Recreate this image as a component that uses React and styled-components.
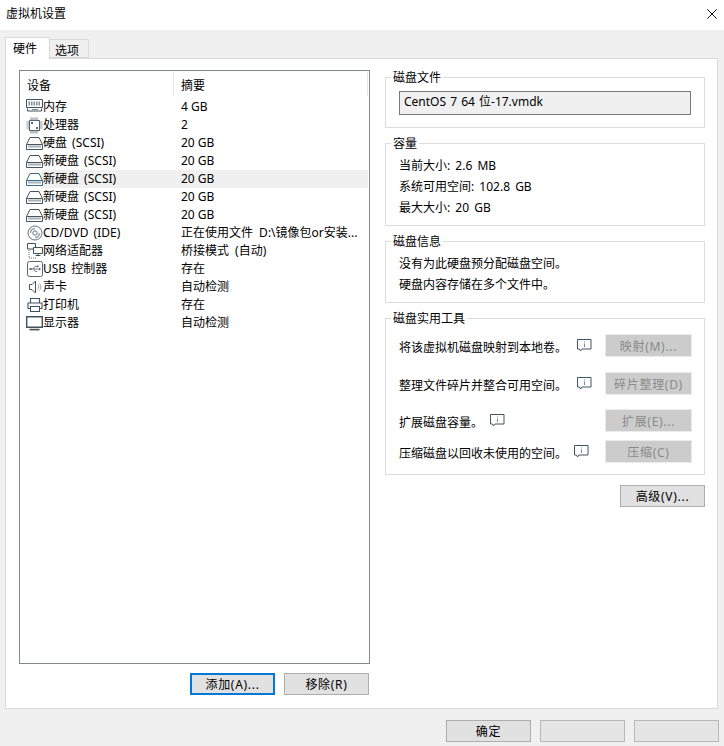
import React from 'react';
import styled, { createGlobalStyle } from 'styled-components';

const Global = createGlobalStyle`
  html, body { margin: 0; padding: 0; background: #f0f0f0; }
  body { font-family: "Noto Sans", "Noto Sans CJK SC", sans-serif; font-size: 12px; color: #000; }
  * { box-sizing: border-box; }
`;

const Window = styled.div`
  width: 724px; height: 746px; display: flex; flex-direction: column; background: #f0f0f0; overflow: hidden;
`;
const TitleBar = styled.div`
  height: 30px; flex: none; background: #fff; display: flex; align-items: center; justify-content: space-between;
  padding: 0 7px 2px 6px; line-height: 16px;
`;
const Tabs = styled.div`
  display: flex; align-items: flex-end; height: 28px; flex: none; padding: 7px 0 0 5px; position: relative; z-index: 1;
`;
const Tab = styled.div`
  height: ${p => (p.$active ? '22px' : '19px')};
  width: ${p => (p.$active ? '45px' : '39px')};
  margin-bottom: ${p => (p.$active ? '-1px' : '0')};
  padding-left: ${p => (p.$active ? '7px' : '5px')};
  line-height: ${p => (p.$active ? '21px' : '22px')};
  background: ${p => (p.$active ? '#fff' : '#f0f0f0')};
  border: 1px solid #d9d9d9;
  border-bottom: ${p => (p.$active ? 'none' : '1px solid #d9d9d9')};
  border-left: ${p => (p.$active ? '1px solid #d9d9d9' : 'none')};
`;
const Panel = styled.div`
  margin: 0 6px 0 5px; height: 651px; flex: none; background: #fff; border: 1px solid #d9d9d9;
  padding: 11px 0 0 13px; display: flex; gap: 15px;
`;
const LeftCol = styled.div`
  width: 351px; flex: none; display: flex; flex-direction: column;
`;
const ListBox = styled.div`
  height: 594px; border: 1px solid #828790; padding: 1px 1px 0 1px; display: flex; flex-direction: column;
`;
const HeadRow = styled.div`
  display: grid; grid-template-columns: 153px 1fr; height: 24px; flex: none; margin-bottom: 2px;
`;
const HeadCell = styled.div`
  padding-left: ${p => (p.$second ? '7px' : '6px')};
  padding-top: 5px; line-height: 18px;
  border-right: 1px solid #e5e5e5;
`;
const Row = styled.div`
  display: grid; grid-template-columns: 153px 1fr; height: 18px; line-height: 18px;
`;
const DevCell = styled.div`
  display: flex; align-items: center; padding-left: 5px; white-space: nowrap; word-spacing: 2px;
  background: ${p => (p.$sel ? 'linear-gradient(90deg,#fff 20px,#f0f0f0 20px)' : 'transparent')};
`;
const IconBox = styled.span`
  width: 17px; height: 18px; flex: none; display: inline-flex; align-items: center; justify-content: center;
`;
const SumCell = styled.div`
  padding-left: 7px; white-space: nowrap; word-spacing: ${p => (p.$long ? '3px' : '0')};
  background: ${p => (p.$sel ? '#f0f0f0' : 'transparent')};
`;
const ListActions = styled.div`
  display: flex; justify-content: flex-end; gap: 9px; margin-top: 9px; padding-right: 1px;
`;
const Btn = styled.div`
  width: ${p => p.$w || 85}px; height: ${p => p.$h || 22}px; display: flex; align-items: center; justify-content: center;
  background: #e1e1e1; border: 1px solid #adadad; line-height: 16px; letter-spacing: .7px; padding-top: 2px;
  ${p => p.$focus && 'border: 2px solid #0078d7;'}
  ${p => p.$disabled && 'background: #ccc; border: 1px solid #ebebeb; color: #8a8a8a;'}
  ${p => p.$blank && 'background: #e5e5e5; border-color: #b8b8b8;'}
`;
const RightCol = styled.div`
  width: 320px; flex: none; padding-top: 7px; display: flex; flex-direction: column;
`;
const Group = styled.fieldset`
  margin: 0 0 15px; padding: 0; border: 1px solid #dcdcdc; height: ${p => p.$h}px; position: relative; min-width: 0;
`;
const Legend = styled.div`
  position: absolute; top: -8px; left: 5px; padding: 0 2px; background: #fff; line-height: 16px;
`;
const FileBox = styled.div`
  margin: 13px 13px 0 13px; height: 24px; border: 1px solid #7a7a7a; background: #f0f0f0; padding-left: 4px; line-height: 20px; word-spacing: 1px;
`;
const Lines = styled.div`
  padding: 14px 0 0 13px; display: flex; flex-direction: column; gap: 5px; line-height: 16px; word-spacing: 2px;
`;
const Tools = styled.div`
  display: flex; flex-direction: column; padding: 15px 13px 0 13px;
`;
const ToolRow = styled.div`
  display: grid; grid-template-columns: 206px 1fr; align-items: center; height: 23px; margin-bottom: ${p => p.$mb}px;
`;
const ToolText = styled.div`
  display: flex; align-items: center; white-space: nowrap; justify-content: space-between; width: ${p => p.$w}px;
`;
const ToolLabel = styled.span`
  padding-top: 4px; line-height: 16px;
`;
const ToolBtn = styled(Btn)` justify-self: end; `;
const AdvancedRow = styled.div`
  display: flex; justify-content: flex-end; margin-top: -5px;
`;
const BottomBar = styled.div`
  display: flex; justify-content: flex-end; gap: 9px; padding: 11px 5px 0 0;
`;

const IC = { fill: 'none', stroke: '#3f5260', strokeWidth: 1 };

const Ram = () => (
  <svg width="17" height="14" viewBox="0 0 17 14" {...IC} style={{ marginBottom: 2 }}>
    <path d="M.5.5h16v8h-16z" strokeWidth="1" />
    <path d="M2.5 3.5h12M2.5 5.5h12" strokeDasharray="1.5 1" stroke="#7f8d96" strokeWidth="2" />
    <path d="M1.5 9.5v2.5h14v-2.5" />
    <path d="M6 10.5h6" stroke="#7f8d96" />
  </svg>
);
const Cpu = () => (
  <svg width="17" height="17" viewBox="0 0 17 17" {...IC}>
    <path d="M3.5 3.5h10v10h-10z" />
    <path d="M5 .5v3M7 .5v3M9 .5v3M11 .5v3M5 13.5v3M7 13.5v3M9 13.5v3M11 13.5v3M.5 5h3M.5 7h3M.5 9h3M.5 11h3M13.5 5h3M13.5 7h3M13.5 9h3M13.5 11h3" stroke="#8996a0" strokeWidth="1.2" />
    <path d="M5 5h2v2h-2zM10 10h2v2h-2z" fill="#59696f" stroke="none" />
  </svg>
);
const Disk = ({ sel }) => (
  <svg width="17" height="13" viewBox="0 0 17 13" {...IC} stroke={sel ? '#3a6c90' : '#46565f'}>
    <path d="M4 .5h9l3.5 7v5H.5v-5z" strokeLinejoin="miter" />
    <path d="M.5 7.5h16" />
    <path d="M2 9.5h13" stroke="#a6b1b8" strokeWidth="2" />
  </svg>
);
const Cd = () => (
  <svg width="16" height="16" viewBox="0 0 16 16" {...IC} stroke="#64727c">
    <circle cx="8" cy="8" r="7" />
    <circle cx="8" cy="8" r="2.2" />
    <path d="M3.5 8A4.5 4.5 0 0 1 8 3.5M12.5 8A4.5 4.5 0 0 1 8 12.5" stroke="#98a4ab" strokeWidth="1.5" />
  </svg>
);
const Net = () => (
  <svg width="16" height="16" viewBox="0 0 16 16" {...IC}>
    <path d="M.5.5h8v5.5h-8z" />
    <path d="M6.5 4.5h9v6h-9z" fill="#fff" />
    <path d="M11 10.5v2M8.5 12.5h5" />
    <path d="M2 7v8h7" strokeDasharray="1 1" stroke="#65757f" />
  </svg>
);
const Usb = () => (
  <svg width="16" height="16" viewBox="0 0 16 16" {...IC} stroke="#546670">
    <rect x=".5" y=".5" width="15" height="15" rx="2" />
    <path d="M3.5 8h9M6 8l2-2.5h2M6.5 8l2 2.5h1.5" stroke="#6f7f88" />
    <path d="M2.5 7h2v2h-2zM10 4.5h1.5v1.5H10z" fill="#546670" stroke="none" />
    <path d="M12 6.5l2 1.5-2 1.5z" fill="#546670" stroke="none" />
  </svg>
);
const Sound = () => (
  <svg width="16" height="16" viewBox="0 0 16 16" {...IC}>
    <path d="M2.5 5.5h2.5l3.5-3.5v12l-3.5-3.5h-2.5z" />
    <path d="M10.5 5.5a3 3 0 0 1 0 5M12.5 4.5a5 5 0 0 1 0 7" stroke="#9aa6ae" />
  </svg>
);
const Printer = () => (
  <svg width="16" height="16" viewBox="0 0 16 16" {...IC} strokeWidth="1.1">
    <path d="M3.5 6v-4.5h9v4.5" />
    <path d="M3.5 11.5h-2.5v-5.5h14v5.5h-2.5" />
    <path d="M3.5 9.5h9v5h-9z" />
  </svg>
);
const Monitor = () => (
  <svg width="17" height="15" viewBox="0 0 17 15" {...IC}>
    <path d="M.7.7h15.6v10.6H.7z" strokeWidth="1.4" />
    <path d="M3.5 13.6h10" strokeWidth="1.6" />
  </svg>
);
const Info = () => (
  <svg width="15" height="13" viewBox="0 0 15 13" fill="none" stroke="#3f5563">
    <path d="M.5.5h13.5v9.5h-9l-1.5 2-1-2h-2z" />
    <path d="M7.5 2.5v1M7.5 4.5v3.5" stroke="#7d8a93" />
  </svg>
);
const CloseX = () => (
  <svg width="10" height="10" viewBox="0 0 10 10" fill="none" stroke="#111"><path d="M.3.3l9.4 9.4M9.7.3l-9.4 9.4" /></svg>
);

const devices = [
  [<Ram />, '内存', '4 GB'],
  [<Cpu />, '处理器', '2'],
  [<Disk />, '硬盘 (SCSI)', '20 GB'],
  [<Disk />, '新硬盘 (SCSI)', '20 GB'],
  [<Disk sel />, '新硬盘 (SCSI)', '20 GB', true],
  [<Disk />, '新硬盘 (SCSI)', '20 GB'],
  [<Disk />, '新硬盘 (SCSI)', '20 GB'],
  [<Cd />, 'CD/DVD (IDE)', '正在使用文件 D:\\镜像包or安装...'],
  [<Net />, '网络适配器', '桥接模式 (自动)'],
  [<Usb />, 'USB 控制器', '存在'],
  [<Sound />, '声卡', '自动检测'],
  [<Printer />, '打印机', '存在'],
  [<Monitor />, '显示器', '自动检测'],
];

const tools = [
  ['将该虚拟机磁盘映射到本地卷。', 193, '映射(M)...', 15],
  ['整理文件碎片并整合可用空间。', 193, '碎片整理(D)', 14],
  ['扩展磁盘容量。', 106, '扩展(E)...', 8],
  ['压缩磁盘以回收未使用的空间。', 190, '压缩(C)', 0],
];

export default function App() {
  return (
    <Window>
      <Global />
      <TitleBar>
        <span>虚拟机设置</span>
        <CloseX />
      </TitleBar>
      <Tabs>
        <Tab $active>硬件</Tab>
        <Tab>选项</Tab>
      </Tabs>
      <Panel>
        <LeftCol>
          <ListBox>
            <HeadRow>
              <HeadCell>设备</HeadCell>
              <HeadCell $second>摘要</HeadCell>
            </HeadRow>
            {devices.map(([icon, name, sum, sel], i) => (
              <Row key={i}>
                <DevCell $sel={sel}><IconBox>{icon}</IconBox>{name}</DevCell>
                <SumCell $sel={sel} $long={!sum.endsWith('GB')}>{sum}</SumCell>
              </Row>
            ))}
          </ListBox>
          <ListActions>
            <Btn $focus>添加(A)...</Btn>
            <Btn>移除(R)</Btn>
          </ListActions>
        </LeftCol>
        <RightCol>
          <Group $h={51}>
            <Legend>磁盘文件</Legend>
            <FileBox>CentOS 7 64 位-17.vmdk</FileBox>
          </Group>
          <Group $h={83}>
            <Legend>容量</Legend>
            <Lines>
              <div>当前大小: 2.6 MB</div>
              <div>系统可用空间: 102.8 GB</div>
              <div>最大大小: 20 GB</div>
            </Lines>
          </Group>
          <Group $h={62}>
            <Legend>磁盘信息</Legend>
            <Lines>
              <div>没有为此硬盘预分配磁盘空间。</div>
              <div>硬盘内容存储在多个文件中。</div>
            </Lines>
          </Group>
          <Group $h={157}>
            <Legend>磁盘实用工具</Legend>
            <Tools>
              {tools.map(([t, w, b, mb]) => (
                <ToolRow key={t} $mb={mb}>
                  <ToolText $w={w}><ToolLabel>{t}</ToolLabel><Info /></ToolText>
                  <ToolBtn $disabled $w={87} $h={23}>{b}</ToolBtn>
                </ToolRow>
              ))}
            </Tools>
          </Group>
          <AdvancedRow><Btn>高级(V)...</Btn></AdvancedRow>
        </RightCol>
      </Panel>
      <BottomBar>
        <Btn>确定</Btn>
        <Btn $blank />
        <Btn $blank />
      </BottomBar>
    </Window>
  );
}
